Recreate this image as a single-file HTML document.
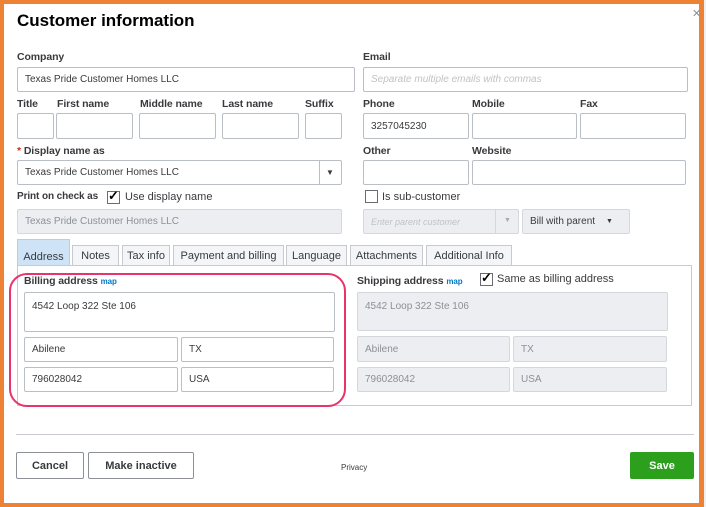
<!DOCTYPE html>
<html><head><style>
*{box-sizing:border-box;margin:0;padding:0}
body{width:706px;height:507px;position:relative;background:#f0f0f0;font-family:"Liberation Sans",Arial,sans-serif;overflow:hidden;color:#393a3d}
.frame{position:absolute;left:0;top:0;width:704px;height:507px;background:#ed8134}
.page{position:absolute;left:4px;top:4px;width:695px;height:499px;background:#fff}
.a{position:absolute}
.lbl{position:absolute;font-size:10.5px;font-weight:bold;color:#393a3d;letter-spacing:-0.1px}
.in{position:absolute;border:1px solid #babec5;background:#fff;border-radius:2px;font-size:10px;padding-left:7px;display:flex;align-items:center;color:#393a3d}
.dis{background:#eceef1;color:#8d9096;border-color:#d4d7dc}
.tab{position:absolute;top:245px;height:20px;border:1px solid #c8cacf;border-bottom:none;background:#f4f5f8;font-size:11px;color:#393a3d;text-align:center;line-height:21px}
.cb{position:absolute;width:13px;height:13px;border:1px solid #6b6c72;background:#fff}
.btn{position:absolute;border:1px solid #8d9096;border-radius:2px;font-size:11px;font-weight:bold;display:flex;align-items:center;justify-content:center;background:#fff}
.map{color:#0077c5;font-size:8px;font-weight:bold}
</style></head><body>
<div class="frame"></div>
<div class="page"></div>
<div class="a" style="left:692px;top:7px;font-size:11px;color:#8d9096">✕</div>
<div class="a" style="left:17px;top:11px;font-size:17px;font-weight:bold;color:#000">Customer information</div>

<div class="lbl" style="left:17px;top:51px">Company</div>
<div class="in" style="left:17px;top:67px;width:338px;height:25px">Texas Pride Customer Homes LLC</div>
<div class="lbl" style="left:363px;top:51px">Email</div>
<div class="in" style="left:363px;top:67px;width:325px;height:25px;color:#c0c2c6;font-style:italic">Separate multiple emails with commas</div>

<div class="lbl" style="left:17px;top:98px">Title</div>
<div class="lbl" style="left:57px;top:98px">First name</div>
<div class="lbl" style="left:140px;top:98px">Middle name</div>
<div class="lbl" style="left:222px;top:98px">Last name</div>
<div class="lbl" style="left:305px;top:98px">Suffix</div>
<div class="in" style="left:17px;top:113px;width:37px;height:26px"></div>
<div class="in" style="left:56px;top:113px;width:77px;height:26px"></div>
<div class="in" style="left:139px;top:113px;width:77px;height:26px"></div>
<div class="in" style="left:222px;top:113px;width:77px;height:26px"></div>
<div class="in" style="left:305px;top:113px;width:37px;height:26px"></div>

<div class="lbl" style="left:363px;top:98px">Phone</div>
<div class="lbl" style="left:472px;top:98px">Mobile</div>
<div class="lbl" style="left:580px;top:98px">Fax</div>
<div class="in" style="left:363px;top:113px;width:106px;height:26px">3257045230</div>
<div class="in" style="left:472px;top:113px;width:105px;height:26px"></div>
<div class="in" style="left:580px;top:113px;width:106px;height:26px"></div>

<div class="lbl" style="left:17px;top:145px"><span style="color:#d52b1e">*</span> Display name as</div>
<div class="in" style="left:17px;top:160px;width:325px;height:25px">Texas Pride Customer Homes LLC</div>
<div class="a" style="left:319px;top:161px;width:1px;height:23px;background:#babec5"></div>
<div class="a" style="left:326px;top:168px;font-size:8px">▼</div>

<div class="lbl" style="left:363px;top:145px">Other</div>
<div class="lbl" style="left:472px;top:145px">Website</div>
<div class="in" style="left:363px;top:160px;width:106px;height:25px"></div>
<div class="in" style="left:472px;top:160px;width:214px;height:25px"></div>

<div class="lbl" style="left:17px;top:191px;font-size:10px">Print on check as</div>
<div class="cb" style="left:107px;top:191px"></div>
<div class="a" style="left:108px;top:188px;font-size:13px;font-weight:bold;color:#000">✓</div>
<div class="a" style="left:125px;top:191px;font-size:11px">Use display name</div>
<div class="in dis" style="left:17px;top:209px;width:325px;height:25px">Texas Pride Customer Homes LLC</div>

<div class="cb" style="left:365px;top:190px"></div>
<div class="a" style="left:382px;top:191px;font-size:11px">Is sub-customer</div>
<div class="in dis" style="left:363px;top:209px;width:156px;height:25px;font-style:italic;color:#c0c2c6;font-size:9px">Enter parent customer</div>
<div class="a" style="left:495px;top:210px;width:1px;height:23px;background:#d4d7dc"></div>
<div class="a" style="left:504px;top:217px;font-size:7px;color:#aaa">▼</div>
<div class="in dis" style="left:522px;top:209px;width:108px;height:25px;color:#393a3d">Bill with parent<span style="margin-left:11px;font-size:7px">▼</span></div>

<div class="tab" style="left:17px;top:239px;height:26px;width:53px;background:#cfe3f7;line-height:34px">Address</div>
<div class="tab" style="left:72px;width:47px">Notes</div>
<div class="tab" style="left:122px;width:48px">Tax info</div>
<div class="tab" style="left:173px;width:111px">Payment and billing</div>
<div class="tab" style="left:286px;width:61px">Language</div>
<div class="tab" style="left:350px;width:73px">Attachments</div>
<div class="tab" style="left:426px;width:86px">Additional Info</div>
<div class="a" style="left:17px;top:265px;width:675px;height:141px;border:1px solid #c8cacf"></div>

<div class="lbl" style="left:24px;top:275px">Billing address <span class="map">map</span></div>
<div class="in" style="left:24px;top:292px;width:311px;height:40px;align-items:flex-start;padding-top:8px">4542 Loop 322 Ste 106</div>
<div class="in" style="left:24px;top:337px;width:154px;height:25px">Abilene</div>
<div class="in" style="left:181px;top:337px;width:153px;height:25px">TX</div>
<div class="in" style="left:24px;top:367px;width:154px;height:25px">796028042</div>
<div class="in" style="left:181px;top:367px;width:153px;height:25px">USA</div>

<div class="lbl" style="left:357px;top:275px">Shipping address <span class="map">map</span></div>
<div class="cb" style="left:480px;top:273px"></div>
<div class="a" style="left:481px;top:270px;font-size:13px;font-weight:bold;color:#000">✓</div>
<div class="a" style="left:497px;top:273px;font-size:11px">Same as billing address</div>
<div class="in dis" style="left:357px;top:292px;width:311px;height:39px;align-items:flex-start;padding-top:8px">4542 Loop 322 Ste 106</div>
<div class="in dis" style="left:357px;top:336px;width:153px;height:26px">Abilene</div>
<div class="in dis" style="left:513px;top:336px;width:154px;height:26px">TX</div>
<div class="in dis" style="left:357px;top:367px;width:153px;height:25px">796028042</div>
<div class="in dis" style="left:513px;top:367px;width:154px;height:25px">USA</div>

<div class="a" style="left:9px;top:273px;width:337px;height:134px;border:2.5px solid #e8336b;border-radius:18px"></div>

<div class="a" style="left:16px;top:434px;width:678px;height:1px;background:#c8cacf"></div>
<div class="btn" style="left:16px;top:452px;width:68px;height:27px">Cancel</div>
<div class="btn" style="left:88px;top:452px;width:106px;height:27px">Make inactive</div>
<div class="a" style="left:341px;top:463px;font-size:8px">Privacy</div>
<div class="btn" style="left:630px;top:452px;width:64px;height:27px;background:#2ca01c;border-color:#2ca01c;color:#fff">Save</div>
</body></html>
